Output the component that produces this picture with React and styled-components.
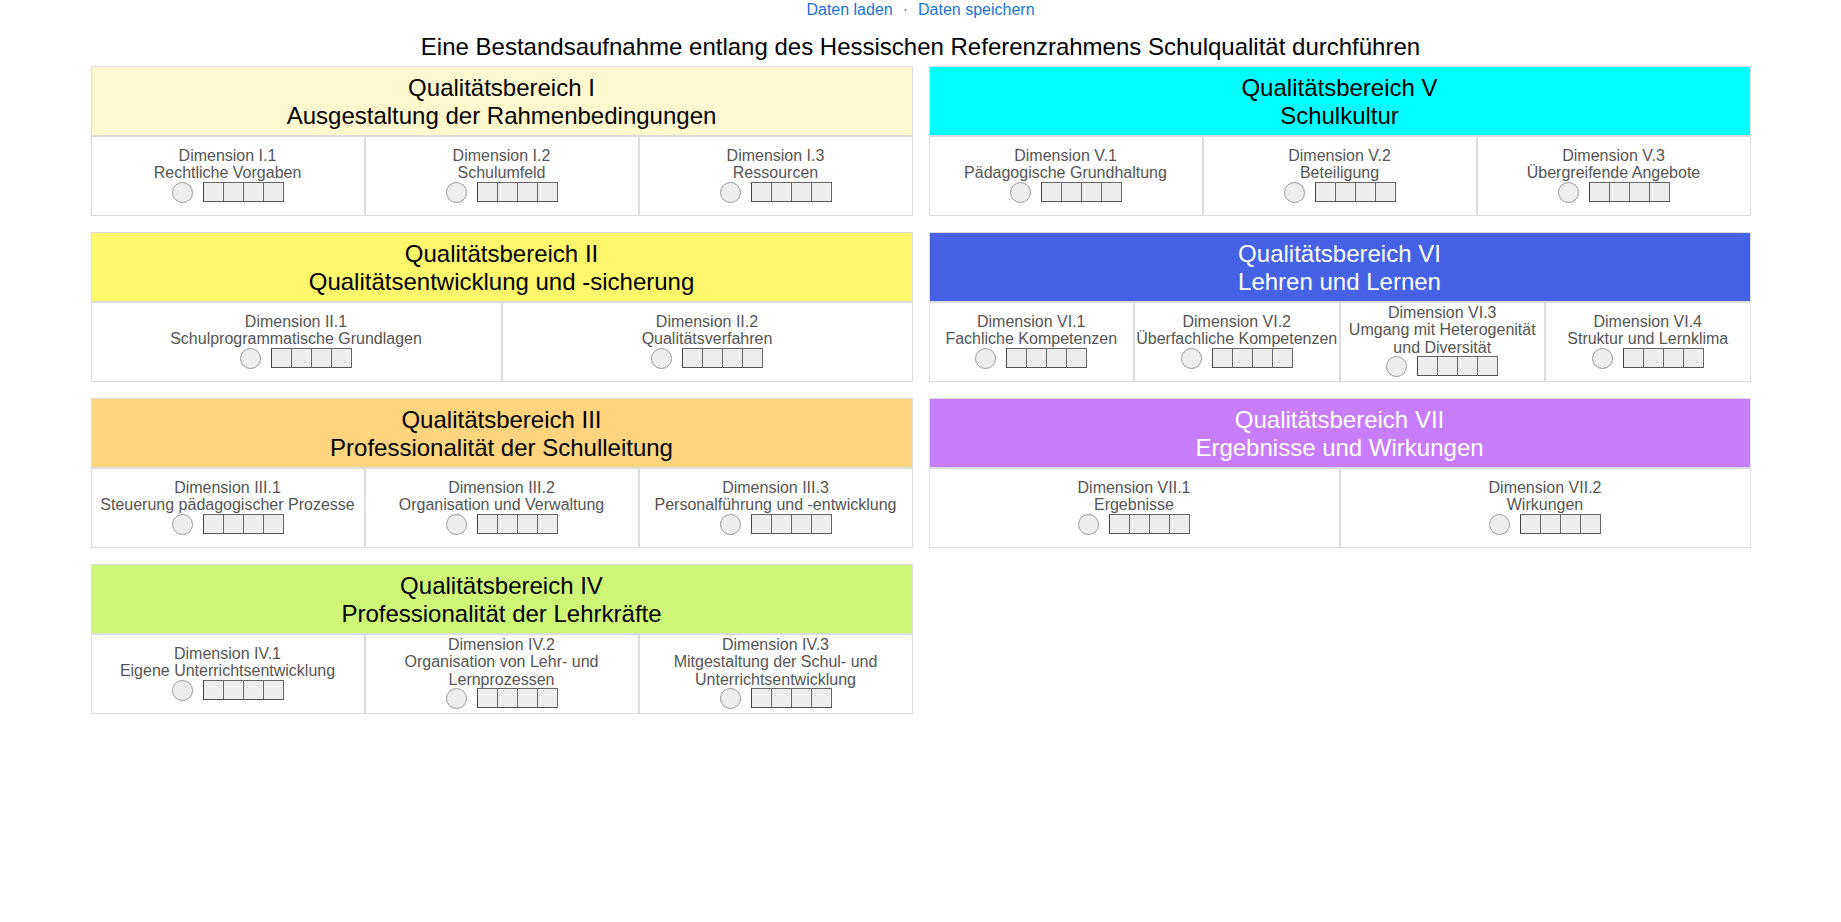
import { createGlobalStyle, styled } from "styled-components";

const GlobalStyle = createGlobalStyle`
	body {
		margin: 0;
		background: #fff;
		font-family: "Liberation Sans", Arial, sans-serif;
	}
`;

const bereiche = [
	{
		nr: "I",
		title: "Ausgestaltung der Rahmenbedingungen",
		bg: "#fff7cd",
		dims: [
			["I.1", "Rechtliche Vorgaben"],
			["I.2", "Schulumfeld"],
			["I.3", "Ressourcen"],
		],
	},
	{
		nr: "V",
		title: "Schulkultur",
		bg: "#00ffff",
		dims: [
			["V.1", "Pädagogische Grundhaltung"],
			["V.2", "Beteiligung"],
			["V.3", "Übergreifende Angebote"],
		],
	},
	{
		nr: "II",
		title: "Qualitätsentwicklung und -sicherung",
		bg: "#fff76b",
		dims: [
			["II.1", "Schulprogrammatische Grundlagen"],
			["II.2", "Qualitätsverfahren"],
		],
	},
	{
		nr: "VI",
		title: "Lehren und Lernen",
		bg: "#4562e6",
		light: true,
		dims: [
			["VI.1", "Fachliche Kompetenzen"],
			["VI.2", "Überfachliche Kompetenzen"],
			["VI.3", "Umgang mit Heterogenität und Diversität"],
			["VI.4", "Struktur und Lernklima"],
		],
	},
	{
		nr: "III",
		title: "Professionalität der Schulleitung",
		bg: "#fed47f",
		dims: [
			["III.1", "Steuerung pädagogischer Prozesse"],
			["III.2", "Organisation und Verwaltung"],
			["III.3", "Personalführung und -entwicklung"],
		],
	},
	{
		nr: "VII",
		title: "Ergebnisse und Wirkungen",
		bg: "#c87dfd",
		light: true,
		dims: [
			["VII.1", "Ergebnisse"],
			["VII.2", "Wirkungen"],
		],
	},
	{
		nr: "IV",
		title: "Professionalität der Lehrkräfte",
		bg: "#cdf576",
		dims: [
			["IV.1", "Eigene Unterrichtsentwicklung"],
			["IV.2", "Organisation von Lehr- und Lernprozessen"],
			["IV.3", "Mitgestaltung der Schul- und Unterrichtsentwicklung"],
		],
	},
];

export default function App() {
	return (
		<>
			<GlobalStyle />
			<Links>
				<a href="#laden">Daten laden</a>
				<Dot>·</Dot>
				<a href="#speichern">Daten speichern</a>
			</Links>
			<Title>
				Eine Bestandsaufnahme entlang des Hessischen Referenzrahmens
				Schulqualität durchführen
			</Title>
			<Grid>
				{bereiche.map((b) => (
					<Card key={b.nr}>
						<Header $bg={b.bg} $light={b.light}>
							Qualitätsbereich {b.nr}
							<br />
							{b.title}
						</Header>
						<DimRow>
							{b.dims.map(([id, name]) => (
								<DimCell key={id}>
									<DimText>
										Dimension {id}
										<br />
										{name}
									</DimText>
									<Indicator>
										<Circle />
										<Boxes>
											<Box />
											<Box />
											<Box />
											<Box />
										</Boxes>
									</Indicator>
								</DimCell>
							))}
						</DimRow>
					</Card>
				))}
			</Grid>
		</>
	);
}

const Links = styled.div`
	display: flex;
	justify-content: center;
	align-items: center;
	gap: 8px;
	padding-top: 1px;
	font-size: 16px;
	line-height: 18px;
	a {
		color: #1a73d9;
		text-decoration: none;
	}
`;

const Dot = styled.span`
	color: #777;
	margin: 0 2px;
`;

const Title = styled.h1`
	margin: 14px 0 5px;
	text-align: center;
	font-size: 24px;
	font-weight: 400;
	line-height: 28px;
	color: #000;
`;

const Grid = styled.div`
	display: grid;
	grid-template-columns: 822px 822px;
	column-gap: 16px;
	row-gap: 16px;
	justify-content: center;
`;

const Card = styled.div`
	display: flex;
	flex-direction: column;
`;

const Header = styled.div`
	border: 1px solid #ddd;
	background: ${(p) => p.$bg};
	color: ${(p) => (p.$light ? "#fff" : "#000")};
	padding: 7px 0 5px;
	text-align: center;
	font-size: 24px;
	line-height: 28px;
`;

const DimRow = styled.div`
	display: flex;
`;

const DimCell = styled.div`
	flex: 1 1 0;
	min-width: 0;
	height: 78px;
	border: 1px solid #ddd;
	background: #fff;
	display: flex;
	flex-direction: column;
	align-items: center;
	justify-content: center;
	text-align: center;
	color: #555;
	font-size: 16px;
	line-height: 17.5px;
`;

const DimText = styled.div``;

const Indicator = styled.div`
	display: flex;
	align-items: flex-start;
	gap: 10px;
	height: 24px;
	flex-shrink: 0;
`;

const Circle = styled.span`
	width: 19px;
	height: 19px;
	border: 1px solid #999;
	border-radius: 50%;
	background: #eee;
`;

const Boxes = styled.span`
	display: flex;
	border-left: 1px solid #444;
	border-bottom: 1px solid #555;
	border-top: 1px solid #666;
`;

const Box = styled.span`
	width: 19px;
	height: 18px;
	background: #eee;
	border-right: 1px solid #666;
`;
